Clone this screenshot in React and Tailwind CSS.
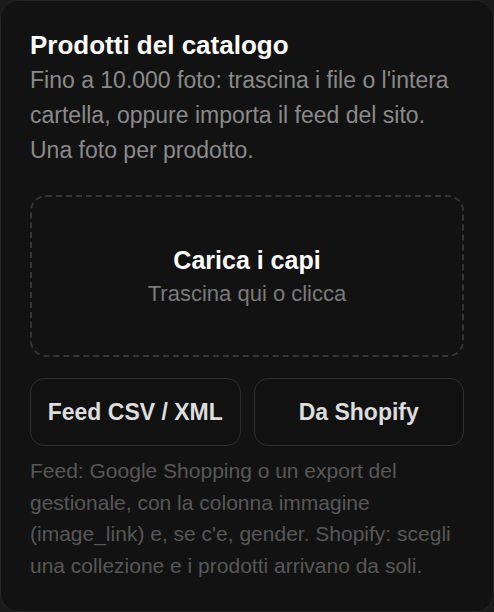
export default function App() {
  return (
    <div className="min-h-[612px] bg-[#1a1a1a]" style={{ fontFamily: '"Liberation Sans", Arial, sans-serif' }}>
      <div className="h-[612px] rounded-[18px] border border-[#262626] bg-[#121212] px-[29px] pt-[28px]">
        <h2 className="text-[26px] font-bold leading-[32px] text-white">Prodotti del catalogo</h2>
        <p className="mt-[2px] text-[23px] leading-[35px] text-[#8a8a8a]">
          Fino a 10.000 foto: trascina i file o l'intera cartella, oppure importa il feed del sito. Una foto per prodotto.
        </p>

        <div className="mt-[27px] flex h-[162px] cursor-pointer flex-col items-center justify-center rounded-[16px] border-2 border-dashed border-[#363636]">
          <div className="text-[25px] font-bold leading-[32px] text-white">Carica i capi</div>
          <div className="mt-[3px] text-[22px] leading-[30px] text-[#7a7a7a]">Trascina qui o clicca</div>
        </div>

        <div className="mt-[21px] grid grid-cols-2 gap-[13px]">
          <button className="h-[68px] rounded-[14px] border border-[#2e2e2e] bg-[#111111] text-[23px] font-bold text-[#dddddd]">
            Feed CSV / XML
          </button>
          <button className="h-[68px] rounded-[14px] border border-[#2e2e2e] bg-[#111111] text-[23px] font-bold text-[#dddddd]">
            Da Shopify
          </button>
        </div>

        <p className="mt-[9px] text-[21px] leading-[31.7px] text-[#585858]">
          Feed: Google Shopping o un export del gestionale, con la colonna immagine (image_link) e, se c'e, gender. Shopify: scegli una collezione e i prodotti arrivano da soli.
        </p>
      </div>
    </div>
  );
}
